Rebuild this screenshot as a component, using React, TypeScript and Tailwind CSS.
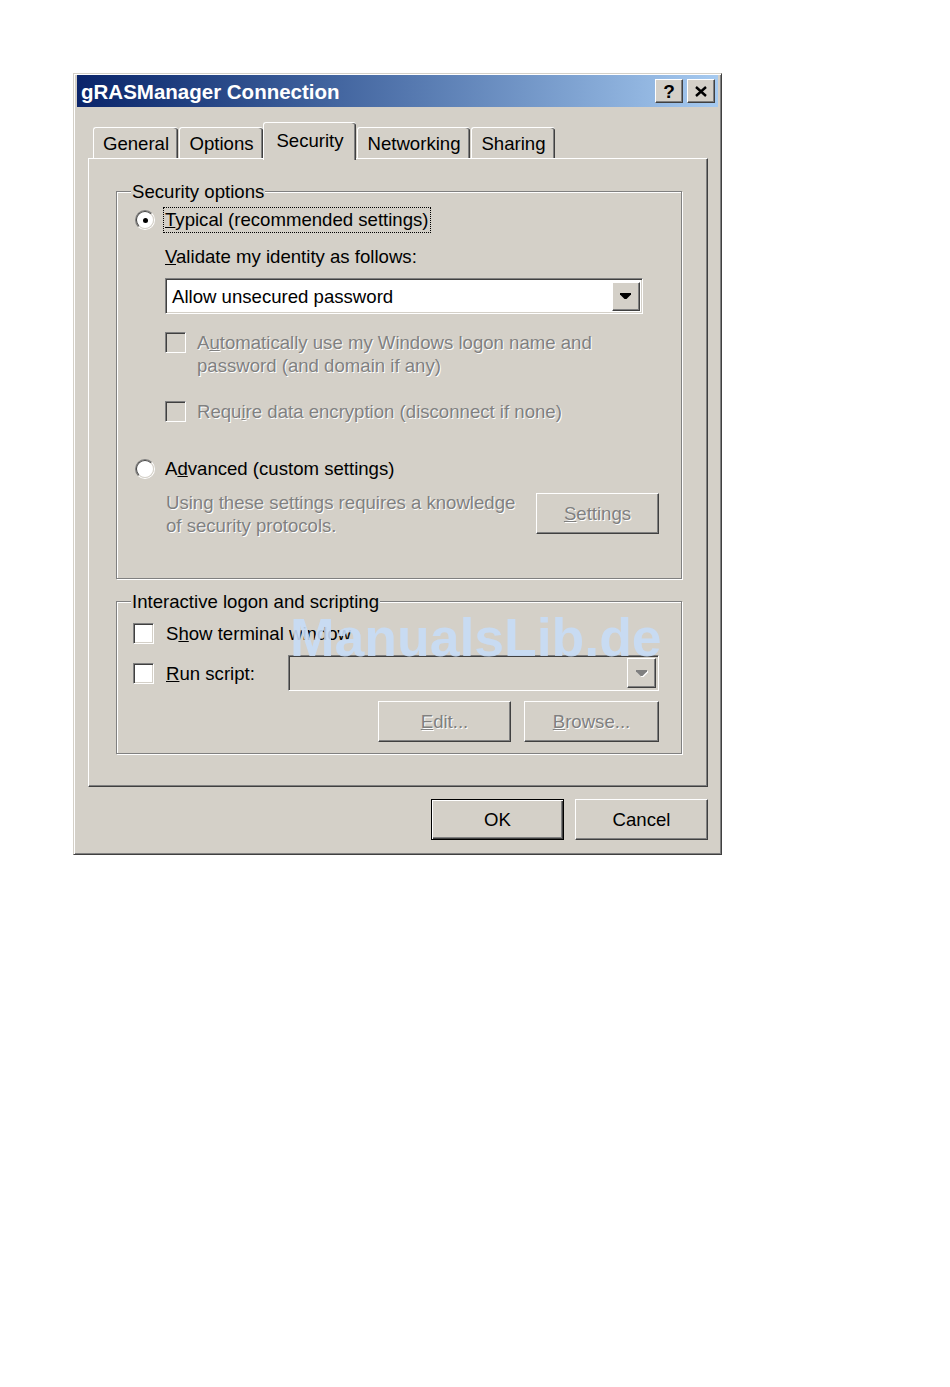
import type { ReactNode } from "react";

const raised =
  "border border-t-white border-l-white border-r-[#404040] border-b-[#404040] shadow-[inset_-1px_-1px_#808080] bg-[#d4d0c8]";
const sunken =
  "border border-t-[#808080] border-l-[#808080] border-r-white border-b-white shadow-[inset_1px_1px_#404040,inset_-1px_-1px_#d4d0c8]";
const etched = "border border-[#808080] shadow-[inset_1px_1px_#fff,1px_1px_#fff]";
const disabledText = "text-[#808080] [text-shadow:1px_1px_0_#fff]";

function Radio({ checked }: { checked?: boolean }) {
  return (
    <div className="flex size-[20px] shrink-0 items-center justify-center rounded-full border border-t-[#808080] border-l-[#808080] border-r-white border-b-white">
      <div className="flex size-full items-center justify-center rounded-full border border-t-[#404040] border-l-[#404040] border-r-[#d4d0c8] border-b-[#d4d0c8] bg-white">
        {checked && <div className="size-[5px] rounded-full bg-black" />}
      </div>
    </div>
  );
}

function Checkbox({ disabled }: { disabled?: boolean }) {
  return (
    <div
      className={`size-[21px] shrink-0 ${sunken} ${disabled ? "bg-[#d4d0c8]" : "bg-white"}`}
    />
  );
}

function Arrow({ disabled }: { disabled?: boolean }) {
  return (
    <svg width="12" height="7" viewBox="0 0 12 7">
      {disabled && <polygon points="1,1 12,1 12,2.5 7.5,7 5.5,7 1,2.5" fill="#fff" />}
      <polygon
        points="0,0 11,0 11,1.5 6.5,6 4.5,6 0,1.5"
        fill={disabled ? "#808080" : "#000"}
      />
    </svg>
  );
}

function Button({
  children,
  className = "",
  disabled,
}: {
  children: ReactNode;
  className?: string;
  disabled?: boolean;
}) {
  return (
    <div
      className={`flex h-[41px] items-center justify-center ${raised} ${disabled ? disabledText : ""} ${className}`}
    >
      {children}
    </div>
  );
}

function GroupBox({
  label,
  className = "",
  children,
}: {
  label: string;
  className?: string;
  children: ReactNode;
}) {
  return (
    <div className={`relative w-[566px] ${etched} ${className}`}>
      <span className="absolute -top-[12px] left-[14px] bg-[#d4d0c8] px-[1px]">{label}</span>
      {children}
    </div>
  );
}

const tabs = [
  { name: "General", cls: "w-[85px]" },
  { name: "Options", cls: "ml-[1px] w-[84px]" },
  { name: "Security", cls: "w-[93px]", active: true },
  { name: "Networking", cls: "ml-[1px] w-[113px]" },
  { name: "Sharing", cls: "ml-[1px] w-[84px]" },
];

export default function App() {
  return (
    <div className="relative min-h-[1387px] w-full bg-white pl-[73px] pt-[73px] font-['Liberation_Sans',Arial,sans-serif] text-[18.6px] leading-[23px] text-black">
      <div className="h-[782px] w-[649px] border border-t-[#d4d0c8] border-l-[#d4d0c8] border-r-[#404040] border-b-[#404040] bg-[#d4d0c8] px-[3px] pt-[1px] shadow-[inset_1px_1px_#fff,inset_-1px_-1px_#808080]">
        <div className="flex h-[32px] items-center justify-between bg-linear-to-r from-[#0a246a] to-[#a6caf0] pl-[4px] pr-[3px]">
          <span className="text-[20.5px] font-bold text-white">gRASManager Connection</span>
          <div className="flex gap-[4px]">
            <div className={`flex h-[24px] w-[28px] items-center justify-center ${raised}`}>
              <span className="text-[19px] leading-none font-bold">?</span>
            </div>
            <div className={`flex h-[24px] w-[28px] items-center justify-center ${raised}`}>
              <svg width="12" height="11" viewBox="0 0 12 11">
                <path d="M1 1 L11 10 M11 1 L1 10" stroke="#000" strokeWidth="2.4" />
              </svg>
            </div>
          </div>
        </div>

        <div className="mt-[15px] ml-[11px] flex h-[36px] items-end pl-[5px]">
          {tabs.map((t) =>
            t.active ? (
              <div
                key={t.name}
                className={`relative z-10 -mb-[2px] flex h-[38px] items-center justify-center rounded-t-[3px] border-t border-l border-white bg-[#d4d0c8] pb-[2px] shadow-[inset_-1px_0_#404040,inset_-2px_0_#808080] ${t.cls}`}
              >
                {t.name}
              </div>
            ) : (
              <div
                key={t.name}
                className={`flex h-[31px] items-center justify-center rounded-t-[3px] border-t border-l border-white shadow-[inset_-1px_0_#404040,inset_-2px_0_#808080] ${t.cls}`}
              >
                {t.name}
              </div>
            ),
          )}
        </div>

        <div className="ml-[11px] h-[629px] w-[620px] border border-t-white border-l-white border-r-[#404040] border-b-[#404040] pt-[32px] pl-[27px] shadow-[inset_-1px_-1px_#808080]">
          <GroupBox label="Security options" className="h-[388px] pt-[15px] pl-[18px]">
            <div className="flex h-[26px] items-center">
              <Radio checked />
              <div className="ml-[8px] border border-dotted border-black px-[1px] leading-[24px]">
                <u>T</u>ypical (recommended settings)
              </div>
            </div>
            <div className="mt-[12px] ml-[30px]">
              <u>V</u>alidate my identity as follows:
            </div>
            <div className={`mt-[10px] ml-[30px] flex h-[36px] w-[478px] items-center justify-between bg-white pr-[2px] pl-[6px] ${sunken}`}>
              <span>Allow unsecured password</span>
              <div className={`flex h-[29px] w-[28px] items-center justify-center ${raised}`}>
                <Arrow />
              </div>
            </div>
            <div className={`mt-[17px] ml-[30px] flex items-start ${disabledText}`}>
              <div className="mt-[1px]">
                <Checkbox disabled />
              </div>
              <div className="ml-[11px]">
                A<u>u</u>tomatically use my Windows logon name and
                <br />
                password (and domain if any)
              </div>
            </div>
            <div className={`mt-[23px] ml-[30px] flex items-center ${disabledText}`}>
              <Checkbox disabled />
              <div className="ml-[11px]">
                Requ<u>i</u>re data encryption (disconnect if none)
              </div>
            </div>
            <div className="mt-[34px] flex items-center">
              <Radio />
              <div className="ml-[10px]">
                A<u>d</u>vanced (custom settings)
              </div>
            </div>
            <div className="mt-[11px] ml-[31px] flex w-[493px] items-start justify-between">
              <div className={disabledText}>
                Using these settings requires a knowledge
                <br />
                of security protocols.
              </div>
              <Button disabled className="mt-[2px] w-[123px]">
                <span>
                  <u>S</u>ettings
                </span>
              </Button>
            </div>
          </GroupBox>

          <GroupBox label="Interactive logon and scripting" className="mt-[22px] h-[153px] pt-[20px] pr-[22px] pl-[16px]">
            <div className="flex h-[23px] items-center">
              <Checkbox />
              <div className="ml-[12px]">
                S<u>h</u>ow terminal window
              </div>
            </div>
            <div className="mt-[10px] flex h-[36px] items-center justify-between">
              <div className="flex items-center">
                <Checkbox />
                <div className="ml-[12px]">
                  <u>R</u>un script:
                </div>
              </div>
              <div className={`flex h-[36px] w-[371px] items-center justify-end pr-[2px] ${sunken}`}>
                <div className={`flex h-[30px] w-[29px] items-center justify-center ${raised}`}>
                  <Arrow disabled />
                </div>
              </div>
            </div>
            <div className="mt-[10px] flex justify-end gap-[13px]">
              <Button disabled className="w-[133px]">
                <span>
                  <u>E</u>dit...
                </span>
              </Button>
              <Button disabled className="w-[135px]">
                <span>
                  <u>B</u>rowse...
                </span>
              </Button>
            </div>
          </GroupBox>
        </div>

        <div className="mt-[12px] ml-[11px] flex w-[620px] justify-end gap-[11px]">
          <div className="flex h-[41px] w-[133px] items-center justify-center border border-black bg-[#d4d0c8] shadow-[inset_1px_1px_#fff,inset_-1px_-1px_#404040,inset_-2px_-2px_#808080]">
            OK
          </div>
          <Button className="w-[133px]">Cancel</Button>
        </div>
      </div>

      <div className="absolute top-[611px] left-[290px] font-['Liberation_Sans',Arial,sans-serif] text-[53.5px] leading-none font-bold text-[#c6dbf6]/90">
        ManualsLib.de
      </div>
    </div>
  );
}
